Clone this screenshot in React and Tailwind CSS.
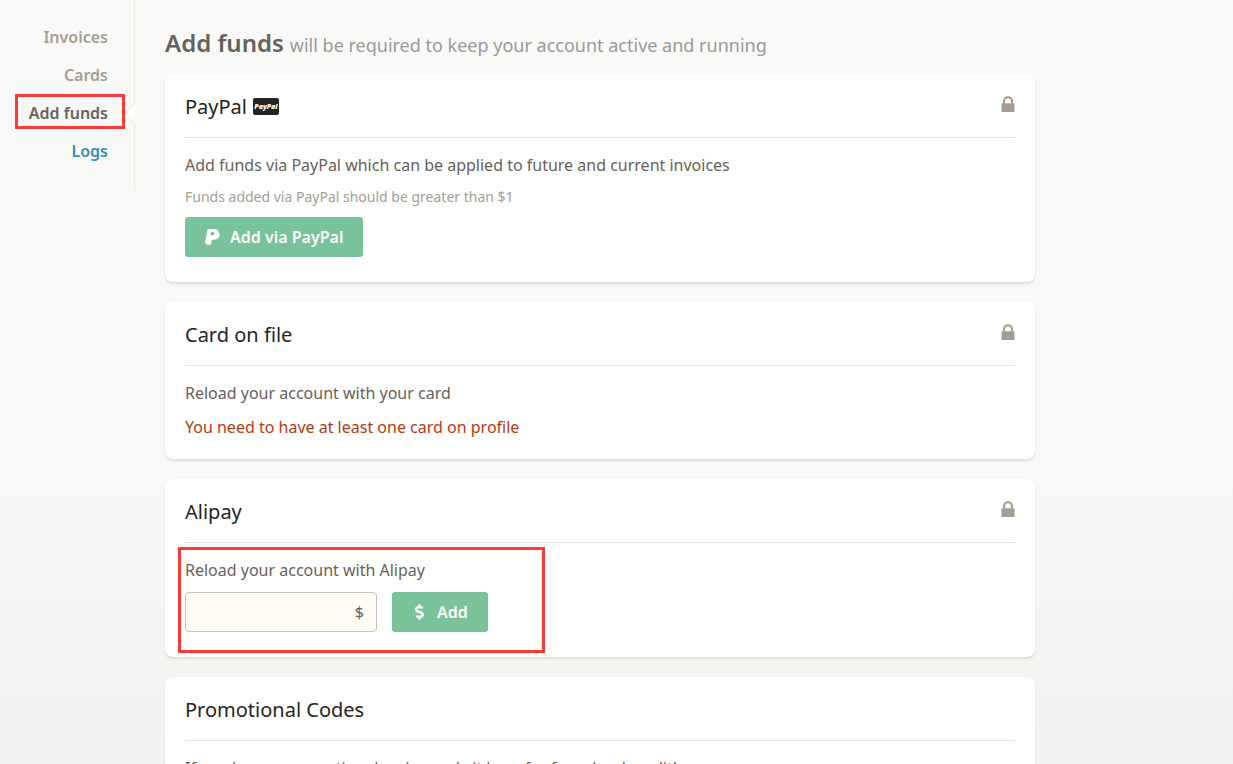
import { FaDollarSign } from "react-icons/fa";

const links = [
  { label: "Invoices", tone: "text-[#a69f91]" },
  { label: "Cards", tone: "text-[#a69f91]" },
  { label: "Add funds", tone: "text-[#66625b]", current: true },
  { label: "Logs", tone: "text-[#3291b6]" },
];

function LockIcon() {
  return (
    <svg
      className="mb-1 h-4 w-3.5 shrink-0 text-[#a49e93]"
      viewBox="0 -1408 1152 1408"
      fill="currentColor"
      aria-hidden="true"
    >
      <path
        transform="scale(1 -1)"
        d="M320 768h512v192q0 106-75 181t-181 75t-181-75t-75-181v-192zM1152 672v-576q0-40-28-68t-68-28h-960q-40 0-68 28t-28 68v576q0 40 28 68t68 28h32v192q0 184 132 316t316 132t316-132t132-316v-192h32q40 0 68-28t28-68z"
      />
    </svg>
  );
}

function PayPalIcon() {
  return (
    <svg className="h-4 w-[15px]" viewBox="0 0 15 16" fill="currentColor" aria-hidden="true">
      <path
        fillRule="evenodd"
        d="M3.4 0H9.6C12 0 13.4 1.1 13.3 3.2C14.5 3.8 15 5 14.7 6.6C14.2 9.4 12.2 10.7 9.2 10.7H7L6.2 14.6C6 15.6 5.6 16 4.7 16H2.3C1.7 16 1.4 15.6 1.5 15.1L1.6 14.5H.8C.2 14.5-.1 14.1 0 13.5L2.4.9C2.5.3 2.8 0 3.4 0ZM6.1 3L5.4 6.4H7C8.5 6.4 9.3 5.8 9.5 4.6C9.7 3.5 9.1 3 7.8 3Z"
      />
    </svg>
  );
}

function PayPalBadge() {
  return (
    <span className="flex h-[17px] w-[26px] items-center justify-center rounded-[2px] bg-[#252422] font-['Open_Sans',sans-serif] text-[7px] leading-none font-extrabold text-white italic">
      PayPal
    </span>
  );
}

function Card({ title, badge, secure, children }) {
  return (
    <section className="rounded-lg bg-white px-5 pb-[25px] shadow-[0_2px_2px_rgba(204,197,185,0.5)]">
      <header className="flex h-16 items-center justify-between border-b border-[#e3e3e3]">
        <h2 className="flex items-center gap-1.5 pt-0.5 text-xl leading-8 text-[#252422]">
          {title}
          {badge}
        </h2>
        {secure && <LockIcon />}
      </header>
      <div className="flex flex-col items-start gap-2.5 pt-[15px]">{children}</div>
    </section>
  );
}

function ActionButton({ icon, children }) {
  return (
    <button
      type="button"
      className="flex h-10 items-center gap-2.5 rounded-[3px] bg-[#7ac29a] px-5 text-base font-semibold text-white"
    >
      {icon}
      {children}
    </button>
  );
}

export default function App() {
  return (
    <div className="flex min-h-screen items-start bg-linear-to-b from-[#f9f9f7] from-55% to-[#f1f1ef] font-['Noto_Sans',sans-serif] text-base leading-6 text-[#66615b]">
      <nav className="flex h-[190px] w-[135px] shrink-0 flex-col items-end gap-3.5 border-r border-[#f1eae0] pt-[25px] pr-[26px]">
        {links.map(({ label, tone, current }) => (
          <a
            key={label}
            href="#"
            aria-current={current ? "page" : undefined}
            className={`relative font-semibold ${tone}`}
          >
            {label}
            {current && (
              <>
                <svg
                  className="absolute top-0.5 -right-[27px]"
                  width="10"
                  height="22"
                  viewBox="0 0 10 22"
                  aria-hidden="true"
                >
                  <path d="M10 0 0 11 10 22" fill="#fffcf5" stroke="#f1eae0" />
                </svg>
                <span className="absolute -top-[7px] -right-[17px] h-[35px] w-[110px] border-3 border-[#fc3a3a]" />
              </>
            )}
          </a>
        ))}
      </nav>

      <main className="mx-[30px] flex w-full max-w-[870px] flex-col pb-5">
        <h1 className="flex min-h-[74px] items-baseline gap-1.5 pt-[27px] text-2xl leading-8 font-semibold text-[#66615b]">
          Add funds
          <small className="text-lg font-normal text-[#9a9a9a]">
            will be required to keep your account active and running
          </small>
        </h1>

        <div className="flex flex-col gap-5">
          <Card title="PayPal" badge={<PayPalBadge />} secure>
            <p>Add funds via PayPal which can be applied to future and current invoices</p>
            <p className="text-sm leading-5 text-[#a49e93]">
              Funds added via PayPal should be greater than $1
            </p>
            <ActionButton icon={<PayPalIcon />}>Add via PayPal</ActionButton>
          </Card>

          <Card title="Card on file" secure>
            <p>Reload your account with your card</p>
            <p className="-mb-[5px] text-[#b33c12]">
              You need to have at least one card on profile
            </p>
          </Card>

          <Card title="Alipay" secure>
            <div className="relative flex flex-col gap-2.5">
              <label htmlFor="alipay-amount">Reload your account with Alipay</label>
              <div className="flex gap-[15px]">
                <div className="flex h-10 w-48 items-center rounded border border-[#ccc5b9] bg-[#fffcf5] pr-3">
                  <input
                    id="alipay-amount"
                    type="text"
                    className="h-full min-w-0 flex-1 px-3 outline-none"
                  />
                  <span>$</span>
                </div>
                <ActionButton icon={<FaDollarSign className="h-4 w-[15px]" />}>Add</ActionButton>
              </div>
              <span className="pointer-events-none absolute -top-[11px] -left-[7px] h-[106px] w-[367px] border-3 border-[#fc3a3a]" />
            </div>
          </Card>

          <Card title="Promotional Codes">
            <p>If you have a promotional code, apply it here for free cloud credit!</p>
          </Card>
        </div>
      </main>
    </div>
  );
}
